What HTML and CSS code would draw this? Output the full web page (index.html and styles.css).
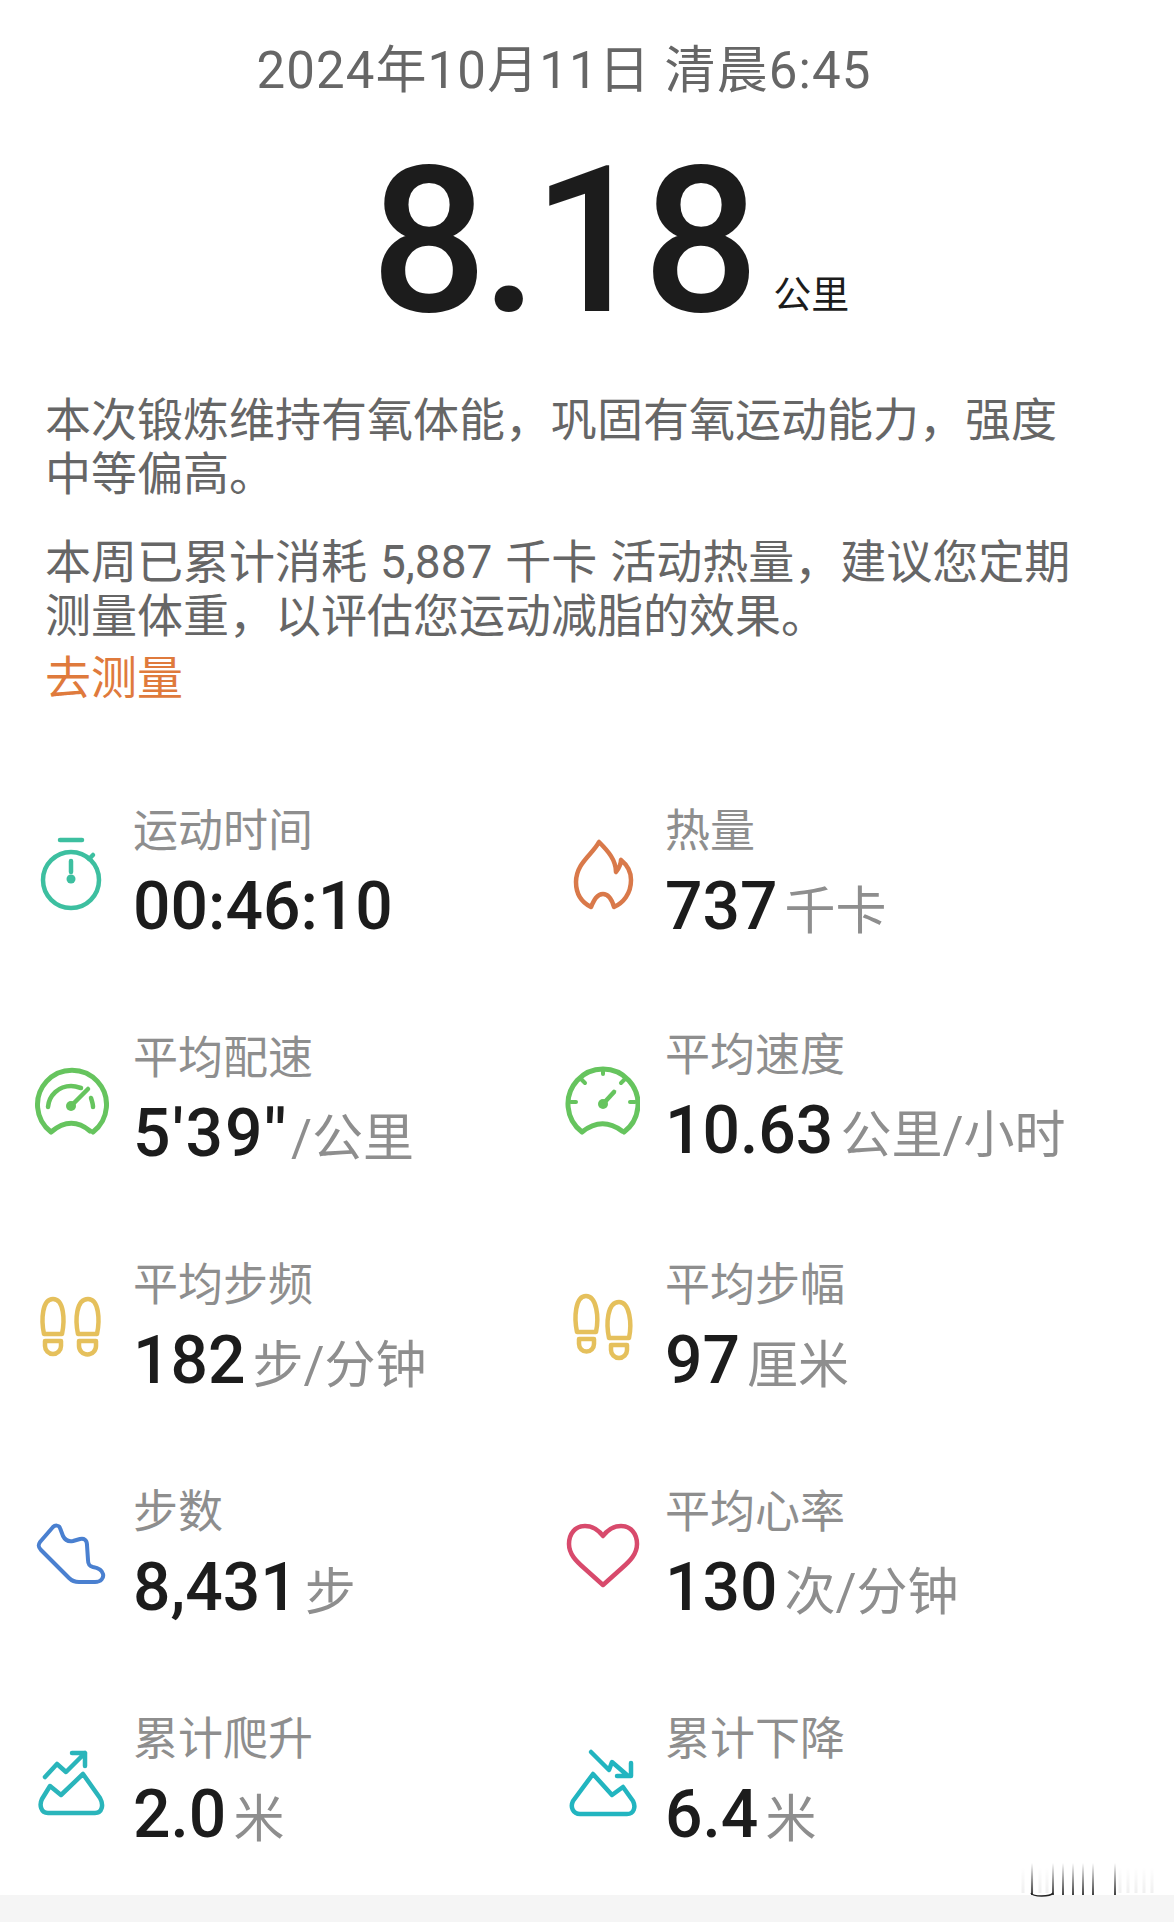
FILE: index.html
```html
<!DOCTYPE html>
<html lang="zh-CN">
<head>
  <meta charset="utf-8" />
  <title>锻炼详情</title>
  <meta name="viewport" content="width=device-width,initial-scale=1.0" />
  <link rel="stylesheet" href="styles.css">
</head>
<body>
<div class="app">
  <div class="date">2024年10月11日 清晨6:45</div>
  <div class="distance">
    <span class="distanceNum">8.18</span>
    <span class="distanceUnit">公里</span>
  </div>
  <p class="summary first">本次锻炼维持有氧体能，巩固有氧运动能力，强度<br>中等偏高。</p>
  <p class="summary second">本周已累计消耗 5,887 千卡 活动热量，建议您定期<br>测量体重，以评估您运动减脂的效果。</p>
  <a class="measureLink">去测量</a>

  <div class="stats">
    <div class="stat">
      <svg class="statIcon" viewBox="0 0 76 96" fill="none" stroke="#3dbfa0" stroke-width="4.5" stroke-linecap="round">
        <path d="M27 14H49" />
        <circle cx="38" cy="54" r="28" />
        <path d="M56 33L60 29M38 35V46" />
        <circle cx="38" cy="53" r="4.5" fill="#3dbfa0" stroke="none" />
      </svg>
      <div class="statText">
        <div class="statLabel">运动时间</div>
        <div class="statValue"><span class="num">00:46:10</span></div>
      </div>
    </div>
    <div class="stat">
      <svg class="statIcon" viewBox="0 0 76 96" fill="none" stroke="#d9794a" stroke-width="4.5" stroke-linejoin="round">
        <path d="M35 16C29 28 12 37 12 56C12 69 19 77 27 81C30 74 33 68 39 68C45 68 48 74 50 81C59 77 67 68 67 54C67 44 62 38 57 34C57 38 55 42 52 46C52 34 44 25 35 16Z" />
      </svg>
      <div class="statText">
        <div class="statLabel">热量</div>
        <div class="statValue"><span class="num">737</span><span class="unit">千卡</span></div>
      </div>
    </div>

    <div class="stat">
      <svg class="statIcon" viewBox="0 0 76 96" fill="none" stroke="#66c45e" stroke-width="5" stroke-linecap="round">
        <path d="M18 79A34.5 34.5 0 1 1 60 79M18 79Q38 62 57 78" />
        <path d="M15 54C16 42 26 33 38 33C41 33 45 34 48 35M58 45C59 48 60 51 60 54M38 53L55 36" stroke-width="4.5" />
        <circle cx="38" cy="53" r="5" fill="#66c45e" stroke="none" />
      </svg>
      <div class="statText">
        <div class="statLabel">平均配速</div>
        <div class="statValue"><span class="num pace">5'39''</span><span class="unit paceUnit">/公里</span></div>
      </div>
    </div>
    <div class="stat raised">
      <svg class="statIcon" viewBox="0 0 76 96" fill="none" stroke="#66c45e" stroke-width="5" stroke-linecap="round">
        <path d="M18 79A35 35 0 1 1 60 79M18 79Q38 63 58 78" />
        <path d="M39 16V21M17 26L21 30M61 26L57 30M7 49H12M71 49H66" stroke-width="4" />
        <path d="M39 51L50 39" stroke-width="4.5" />
        <circle cx="39" cy="51" r="5" fill="#66c45e" stroke="none" />
      </svg>
      <div class="statText">
        <div class="statLabel">平均速度</div>
        <div class="statValue"><span class="num">10.63</span><span class="unit">公里/小时</span></div>
      </div>
    </div>

    <div class="stat">
      <svg class="statIcon" viewBox="0 0 76 96" fill="none" stroke="#e5c05c" stroke-width="4.5" stroke-linejoin="round">
        <path d="M11 54C8 40 9 19 20 19C31 19 32 40 29 54Z" />
        <path d="M12 61H28V66A8 8 0 0 1 12 66Z" />
        <path d="M45 54C42 40 43 19 55 19C66 19 67 40 64 54Z" />
        <path d="M46 61H63V66A8.5 8.5 0 0 1 46 66Z" />
      </svg>
      <div class="statText">
        <div class="statLabel">平均步频</div>
        <div class="statValue"><span class="num">182</span><span class="unit">步/分钟</span></div>
      </div>
    </div>
    <div class="stat">
      <svg class="statIcon" viewBox="0 0 76 96" fill="none" stroke="#e5c05c" stroke-width="4.5" stroke-linejoin="round">
        <path d="M13 52C10 38 11 16 22 16C33 16 35 38 32 52Z" />
        <path d="M15 59H30V64A7.5 7.5 0 0 1 15 64Z" />
        <path d="M45 58C42 44 43 22 55 22C66 22 68 44 65 58Z" />
        <path d="M47 65H63V70A8 8 0 0 1 47 70Z" />
      </svg>
      <div class="statText">
        <div class="statLabel">平均步幅</div>
        <div class="statValue"><span class="num">97</span><span class="unit">厘米</span></div>
      </div>
    </div>

    <div class="stat">
      <svg class="statIcon" viewBox="0 0 76 96" fill="none" stroke="#4a80d0" stroke-width="4" stroke-linejoin="round">
        <path d="M20 20L7 35C5 38 5 40 8 43L36 71C39 74 42 75 46 75H62C68 75 71 71 70 67C69 63 66 61 60 60C56 59 55 57 55 53L54 38C54 33 51 31 47 32L40 34C35 35 32 33 30 29L27 21C26 18 22 18 20 20Z" />
      </svg>
      <div class="statText">
        <div class="statLabel">步数</div>
        <div class="statValue"><span class="num">8,431</span><span class="unit">步</span></div>
      </div>
    </div>
    <div class="stat">
      <svg class="statIcon" viewBox="0 0 76 96" fill="none" stroke="#d84a6c" stroke-width="4.5" stroke-linejoin="round">
        <path d="M39 29C33 21 27 19 21 19C11 19 5 27 5 37C5 47 12 54 20 61L39 78L58 61C66 54 73 47 73 37C73 27 67 19 57 19C51 19 45 21 39 29Z" />
      </svg>
      <div class="statText">
        <div class="statLabel">平均心率</div>
        <div class="statValue"><span class="num">130</span><span class="unit">次/分钟</span></div>
      </div>
    </div>

    <div class="stat">
      <svg class="statIcon" viewBox="0 0 76 96" fill="none" stroke="#2ab5bb" stroke-width="4.5" stroke-linecap="round" stroke-linejoin="round">
        <path d="M12 43L24 30L33 38L52 19M39 19H52V32" />
        <path d="M17 52L28 61L50 40L67 64C71 71 69 79 62 79H15C8 79 6 71 9 65Z" />
      </svg>
      <div class="statText">
        <div class="statLabel">累计爬升</div>
        <div class="statValue"><span class="num">2.0</span><span class="unit">米</span></div>
      </div>
    </div>
    <div class="stat">
      <svg class="statIcon" viewBox="0 0 76 96" fill="none" stroke="#22b5c0" stroke-width="4.5" stroke-linecap="round" stroke-linejoin="round">
        <path d="M27 18L45 36L48 28L63 41M67 29V42H53" />
        <path d="M29 40L48 61L59 53L69 67C72 73 70 80 63 80H16C9 80 6 73 9 67Z" />
      </svg>
      <div class="statText">
        <div class="statLabel">累计下降</div>
        <div class="statValue"><span class="num">6.4</span><span class="unit">米</span></div>
      </div>
    </div>
  </div>

  <div class="bottomBar">
    <svg class="watermark" viewBox="0 0 140 38" fill="none">
      <defs>
        <linearGradient id="fade" x1="0" y1="0" x2="0" y2="1">
          <stop offset="0" stop-color="#000" stop-opacity="0" />
          <stop offset="1" stop-color="#000" stop-opacity="0.75" />
        </linearGradient>
        <linearGradient id="faint" x1="0" y1="0" x2="0" y2="1">
          <stop offset="0" stop-color="#000" stop-opacity="0" />
          <stop offset="1" stop-color="#000" stop-opacity="0.06" />
        </linearGradient>
      </defs>
      <path d="M3 8V34M12 8V34M20 8V34M27 8V34M100 8V34M108 8V34M116 8V34M124 8V34M132 8V34" stroke="url(#faint)" stroke-width="3" />
      <rect x="11" y="4" width="2" height="32" fill="url(#fade)" />
      <rect x="32" y="4" width="2" height="32" fill="url(#fade)" />
      <rect x="42" y="4" width="2" height="32" fill="url(#fade)" />
      <rect x="52" y="4" width="2" height="32" fill="url(#fade)" />
      <rect x="62" y="4" width="2" height="32" fill="url(#fade)" />
      <rect x="72" y="4" width="2" height="32" fill="url(#fade)" />
      <rect x="94" y="4" width="2" height="32" fill="url(#fade)" />
      <path d="M11 34C13 38 30 38 33 34" stroke="#222" stroke-width="1.5" />
    </svg>
  </div>
</div>
</body>
</html>
```

FILE: styles.css
```css
* {
  box-sizing: border-box;
}

body {
  margin: 0;
  background: #fff;
  font-family: Roboto, "Noto Sans CJK SC", sans-serif;
}

.app {
  display: flex;
  flex-direction: column;
  height: 1922px;
  overflow: hidden;
}

.date {
  margin-top: 41px;
  padding-right: 46px;
  height: 60px;
  line-height: 60px;
  text-align: center;
  font-size: 51px;
  letter-spacing: 1.1px;
  color: #666;
}

.distance {
  display: flex;
  justify-content: center;
  align-items: baseline;
  margin-top: 45px;
  padding-right: 50px;
  height: 190px;
  line-height: 190px;
  color: #1c1c1c;
}

.distanceNum {
  font-size: 205px;
  font-weight: 500;
  letter-spacing: -6px;
}

.distanceUnit {
  margin-left: 20px;
  margin-right: -96px;
  font-size: 38px;
  line-height: 1;
  transform: translateY(-3px);
}

.summary {
  margin: 0;
  padding-left: 45px;
  font-size: 46px;
  line-height: 54px;
  color: #666;
  white-space: nowrap;
}

.first {
  margin-top: 57px;
}

.second {
  margin-top: 34px;
  word-spacing: 1.5px;
}

.measureLink {
  display: block;
  margin-top: 8px;
  padding-left: 45px;
  font-size: 46px;
  line-height: 54px;
  color: #df7a3c;
}

.stats {
  display: grid;
  grid-template-columns: 531px 1fr;
  grid-auto-rows: 148px;
  row-gap: 79px;
  margin-top: 95px;
}

.stat {
  display: flex;
  align-items: center;
}

.statIcon {
  flex: none;
  width: 76px;
  height: 96px;
  margin-left: 33px;
  margin-right: 25px;
}

.stat:nth-child(odd) .statIcon {
  margin-right: 24px;
}

.statText {
  margin-top: 5px;
}

.raised .statText {
  margin-top: -1px;
}

.statLabel {
  height: 61px;
  line-height: 60px;
  font-size: 45px;
  color: #8e8e8e;
}

.statValue {
  height: 88px;
  line-height: 88px;
  white-space: nowrap;
}

.num {
  font-size: 66px;
  font-weight: 500;
  color: #1c1c1c;
}

.pace {
  letter-spacing: 2px;
}

.unit {
  margin-left: 7px;
  font-size: 51px;
  color: #8e8e8e;
}

.paceUnit {
  margin-left: 3px;
}

.bottomBar {
  position: relative;
  flex: none;
  margin-top: auto;
  height: 27px;
  background: #f5f5f5;
}

.watermark {
  position: absolute;
  left: 1020px;
  top: -36px;
  width: 140px;
  height: 38px;
}
```
